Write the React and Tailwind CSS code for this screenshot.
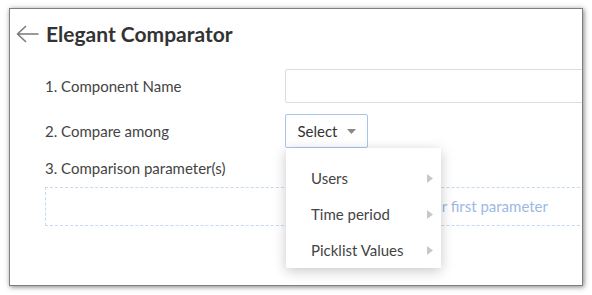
function Caret() {
  return (
    <svg width="6" height="9" viewBox="0 0 6 9" className="text-[#c8c8c8]">
      <path d="M0 0 L6 4.5 L0 9 Z" fill="currentColor" />
    </svg>
  )
}

function BackArrow() {
  return (
    <svg width="23" height="18" viewBox="0 0 23 18" fill="none" stroke="#7a7a7a" strokeWidth="1.6" strokeLinecap="round" strokeLinejoin="round">
      <path d="M22 9 H1.5 M9.5 1.5 L1.5 9 L9.5 16.5" />
    </svg>
  )
}

export default function App() {
  const options = ['Users', 'Time period', 'Picklist Values']

  return (
    <div className="w-[592px] h-[295px] bg-white pt-[8px] pl-[9px] font-['Lato','Noto_Sans',sans-serif] text-[#333]">
      <div className="relative w-[574px] h-[278px] bg-white border border-[#7f7f7f] shadow-[1px_1px_5px_rgba(0,0,0,0.5)] overflow-hidden">
        {/* Header */}
        <div className="flex items-center h-[50px] pl-[6px]">
          <BackArrow />
          <h1 className="ml-[7px] text-[21px] font-bold text-[#333]">Elegant Comparator</h1>
        </div>

        {/* Form */}
        <div className="pl-[35px]">
          <div className="flex items-center mt-[10px]">
            <label className="w-[240px] shrink-0 text-[15px] text-[#444]">1. Component Name</label>
            <div className="h-[34px] w-[320px] shrink-0 border border-[#dcdcdc] rounded-[2px]" />
          </div>

          <div className="flex items-center mt-[11px]">
            <label className="w-[240px] shrink-0 text-[15px] text-[#444]">2. Compare among</label>
            <button className="h-[34px] w-[83px] flex items-center justify-center gap-[9px] border border-[#a7c6ee] rounded-[2px] text-[15px] text-[#333]">
              Select
              <svg width="9" height="5" viewBox="0 0 9 5"><path d="M0 0 H9 L4.5 5 Z" fill="#888" /></svg>
            </button>
          </div>

          <div className="mt-[10px] text-[15px] text-[#444] leading-[20px]">3. Comparison parameter(s)</div>
          <div className="mt-[9px] h-[39px] w-[560px] shrink-0 border border-dashed border-[#c6daf2] flex items-center pl-[329px] text-[15px] text-[#9cb9e4] whitespace-nowrap">
            + Add your first parameter
          </div>
        </div>

        {/* Dropdown menu */}
        <div className="absolute left-[276px] top-[139px] w-[155px] h-[120px] bg-white shadow-[0_3px_12px_rgba(0,0,0,0.22)] pt-[12px]">
          {options.map((o) => (
            <div key={o} className="h-[36px] flex items-center justify-between pl-[25px] pr-[8px] text-[15px] text-[#444]">
              <span>{o}</span>
              <Caret />
            </div>
          ))}
        </div>
      </div>
    </div>
  )
}
